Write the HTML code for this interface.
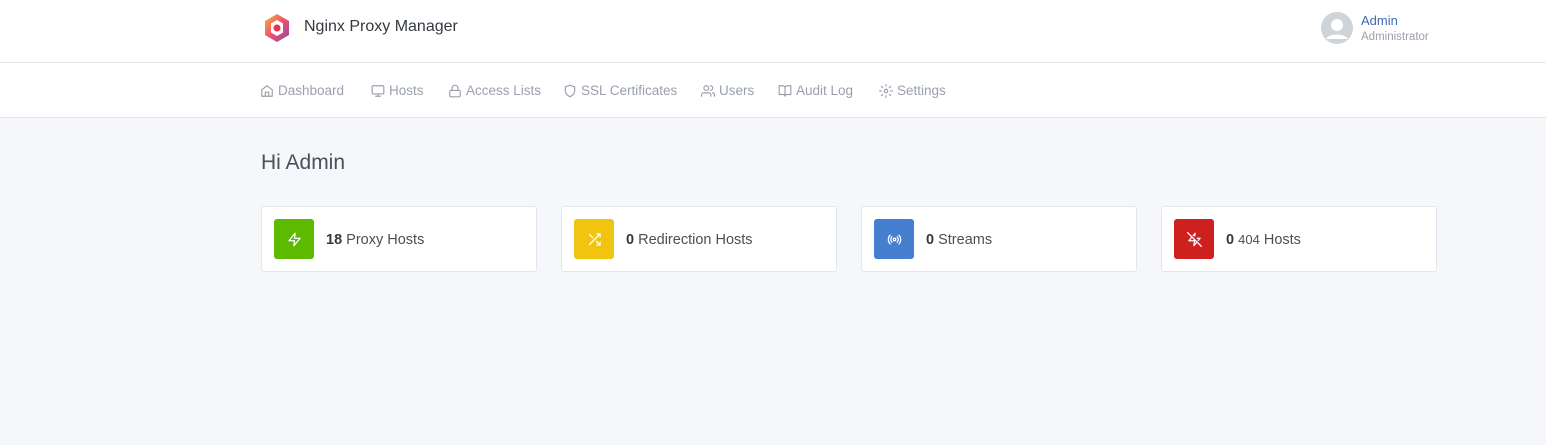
<!DOCTYPE html>
<html><head><meta charset="utf-8"><style>
*{box-sizing:border-box;margin:0;padding:0}
body{width:1546px;height:445px;background:#f5f7fb;font-family:"Liberation Sans",sans-serif;color:#495057;overflow:hidden;position:relative}
.hdr{position:absolute;left:0;top:0;width:1546px;height:63px;background:#fff;border-bottom:1px solid #e0e5ec}
.nav{position:absolute;left:0;top:63px;width:1546px;height:55px;background:#fff;border-bottom:1px solid #e0e5ec}
.brand{position:absolute;left:304px;top:18px;font-size:16px;color:#343a40}
.ni{position:absolute;top:83px;font-size:13.5px;color:#9aa0ac;display:flex;align-items:center;gap:4px}
.ni svg{width:14px;height:14px;stroke:#9aa0ac;fill:none;stroke-width:2;stroke-linecap:round;stroke-linejoin:round}
h1{position:absolute;left:261px;top:151px;font-size:21px;font-weight:normal;color:#495057}
.card{position:absolute;top:206px;width:276px;height:66px;background:#fff;border:1px solid #e3e6ec;border-radius:3px}
.ic{position:absolute;left:12px;top:12px;width:40px;height:40px;border-radius:3px;display:flex;align-items:center;justify-content:center}
.ic svg{width:15px;height:15px;stroke:#fff;fill:none;stroke-width:2;stroke-linecap:round;stroke-linejoin:round}
.ct{position:absolute;left:64px;top:25px;font-size:14.5px;color:#495057}
.ct b{color:#343a40}
</style></head><body>
<div class="hdr"></div><div class="nav"></div>
<svg style="position:absolute;left:263px;top:13px" width="28" height="30" viewBox="0 0 28 30">
<defs><linearGradient id="g" x1="0" y1="0" x2="1" y2="1"><stop offset="0" stop-color="#f7b733"/><stop offset=".5" stop-color="#f0506e"/><stop offset="1" stop-color="#8e44ad"/></linearGradient></defs>
<polygon points="14,1 26,8 26,22 14,29 2,22 2,8" fill="url(#g)"/>
<polygon points="14,7 20,10.5 20,19.5 14,23 8,19.5 8,10.5" fill="#fff"/>
<circle cx="14" cy="15" r="3.5" fill="#e8334a"/></svg>
<div class="brand">Nginx Proxy Manager</div>
<svg style="position:absolute;left:1321px;top:12px" width="32" height="32" viewBox="0 0 32 32"><circle cx="16" cy="16" r="16" fill="#ced4da"/><circle cx="16" cy="13" r="6" fill="#fff"/><path d="M5 27c3-6 19-6 22 0" fill="#fff"/></svg>
<div style="position:absolute;left:1361px;top:13px;font-size:13px;color:#3f6bb5">Admin</div>
<div style="position:absolute;left:1361px;top:31px;font-size:11.5px;color:#9aa0ac">Administrator</div>

<div class="ni" style="left:260px"><svg viewBox="0 0 24 24"><path d="M3 10l9-7 9 7v11H3z"/><path d="M9 21v-7h6v7"/></svg>Dashboard</div>
<div class="ni" style="left:371px"><svg viewBox="0 0 24 24"><rect x="2" y="3" width="20" height="14" rx="2"/><path d="M8 21h8M12 17v4"/></svg>Hosts</div>
<div class="ni" style="left:448px"><svg viewBox="0 0 24 24"><rect x="3" y="11" width="18" height="11" rx="2"/><path d="M7 11V7a5 5 0 0110 0v4"/></svg>Access Lists</div>
<div class="ni" style="left:563px"><svg viewBox="0 0 24 24"><path d="M12 22s8-4 8-10V5l-8-3-8 3v7c0 6 8 10 8 10z"/></svg>SSL Certificates</div>
<div class="ni" style="left:701px"><svg viewBox="0 0 24 24"><circle cx="9" cy="7" r="4"/><path d="M1 21v-2a4 4 0 014-4h8a4 4 0 014 4v2M16 3a4 4 0 010 8M23 21v-2a4 4 0 00-3-4"/></svg>Users</div>
<div class="ni" style="left:778px"><svg viewBox="0 0 24 24"><path d="M2 3h6a4 4 0 014 4v14a3 3 0 00-3-3H2zM22 3h-6a4 4 0 00-4 4v14a3 3 0 013-3h7z"/></svg>Audit Log</div>
<div class="ni" style="left:879px"><svg viewBox="0 0 24 24"><circle cx="12" cy="12" r="3"/><path d="M12 1v3M12 20v3M4.2 4.2l2.1 2.1M17.7 17.7l2.1 2.1M1 12h3M20 12h3M4.2 19.8l2.1-2.1M17.7 6.3l2.1-2.1"/></svg>Settings</div>

<h1>Hi Admin</h1>

<div class="card" style="left:261px"><div class="ic" style="background:#5eba00"><svg viewBox="0 0 24 24"><path d="M13 2L3 14h9l-1 8 10-12h-9z"/></svg></div><div class="ct"><b>18</b> Proxy Hosts</div></div>
<div class="card" style="left:561px"><div class="ic" style="background:#f1c40f"><svg viewBox="0 0 24 24"><path d="M16 3h5v5M4 20L21 3M21 16v5h-5M15 15l6 6M4 4l5 5"/></svg></div><div class="ct"><b>0</b> Redirection Hosts</div></div>
<div class="card" style="left:861px"><div class="ic" style="background:#467fcf"><svg viewBox="0 0 24 24"><circle cx="12" cy="12" r="2"/><path d="M16.2 7.8a6 6 0 010 8.5M7.8 16.2a6 6 0 010-8.5M19 5a10 10 0 010 14M5 19A10 10 0 015 5"/></svg></div><div class="ct"><b>0</b> Streams</div></div>
<div class="card" style="left:1161px"><div class="ic" style="background:#cd201f"><svg viewBox="0 0 24 24"><path d="M12.4 6.3L13 2l-3 3.7M16.3 10H21l-2.8 3.4M8 8l-5 6h9l-1 8 5-6M1 1l22 22"/></svg></div><div class="ct"><b>0</b> <span style="font-size:13px">404</span> Hosts</div></div>
</body></html>
